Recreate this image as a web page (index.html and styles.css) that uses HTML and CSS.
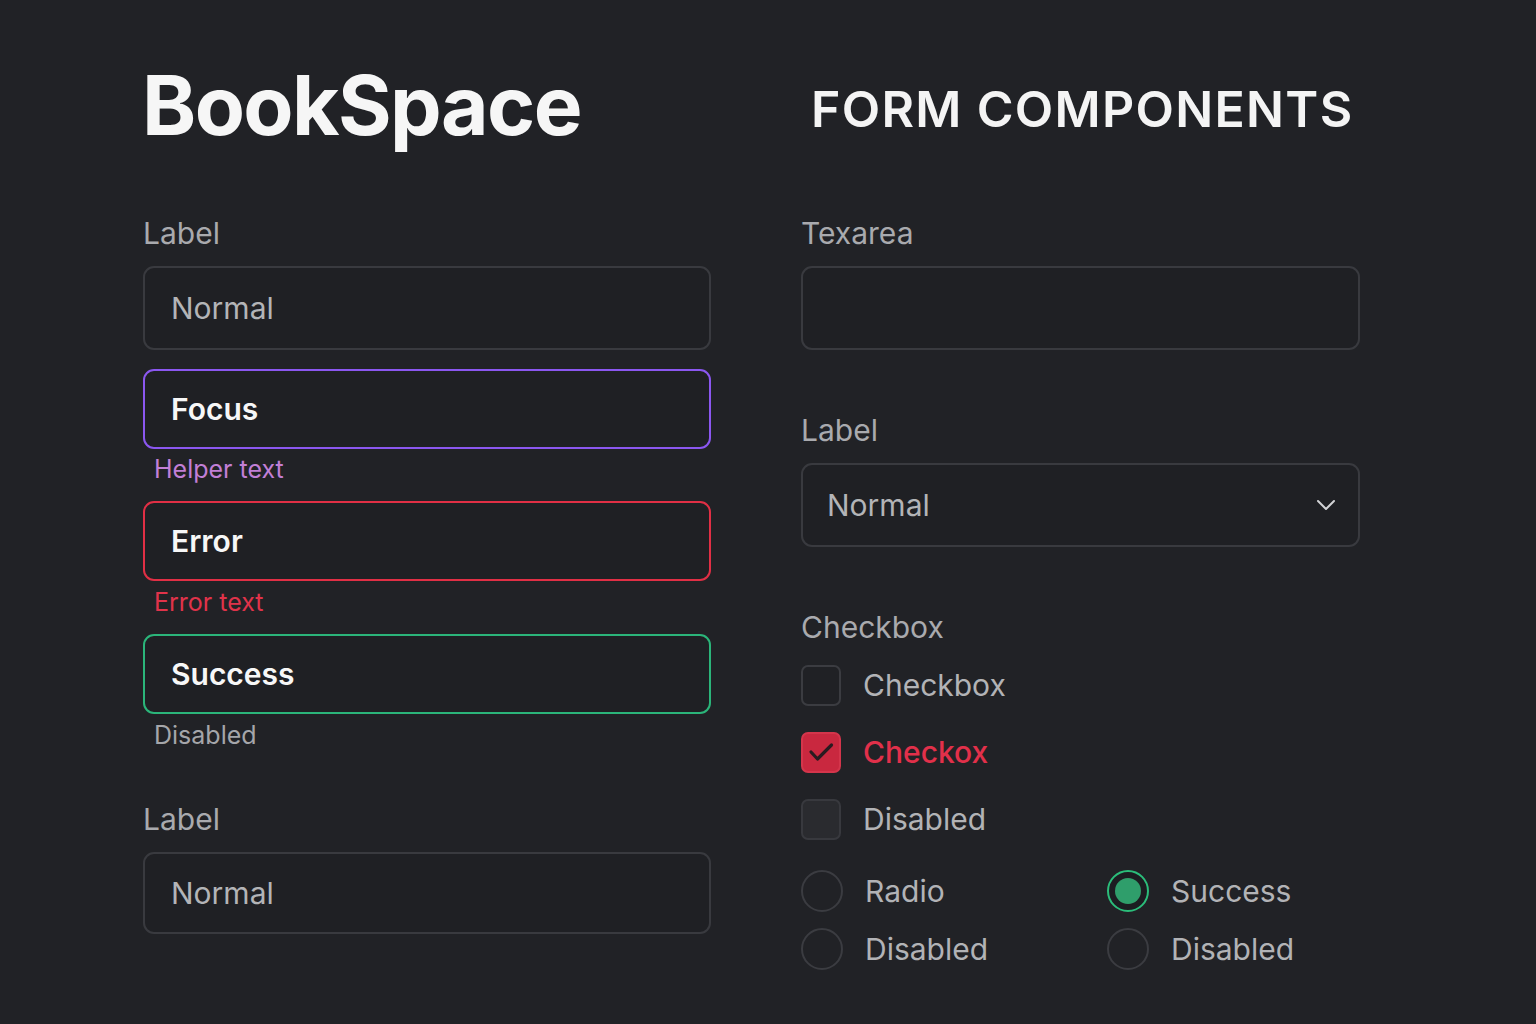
FILE: index.html
```html
<!DOCTYPE html>
<html lang="en">
<head>
<meta charset="utf-8">
<title>BookSpace – Form Components</title>
<link rel="stylesheet" href="styles.css">
</head>
<body>
<main class="page">
  <section class="col col-left">
    <h1 class="brand">BookSpace</h1>

    <div class="field">
      <div class="label">Label</div>
      <div class="input input-normal"><span class="ph">Normal</span></div>
    </div>

    <div class="input input-focus state"><span class="val">Focus</span></div>
    <div class="hint hint-helper">Helper text</div>

    <div class="input input-error state"><span class="val">Error</span></div>
    <div class="hint hint-error">Error text</div>

    <div class="input input-success state"><span class="val">Success</span></div>
    <div class="hint hint-disabled">Disabled</div>

    <div class="field field-last">
      <div class="label">Label</div>
      <div class="input input-normal input-tall"><span class="ph">Normal</span></div>
    </div>
  </section>

  <section class="col col-right">
    <h2 class="section-title">FORM COMPONENTS</h2>

    <div class="field">
      <div class="label">Texarea</div>
      <div class="input textarea"></div>
    </div>

    <div class="field field-select">
      <div class="label">Label</div>
      <div class="input select">
        <span class="ph">Normal</span>
        <svg class="chevron" width="20" height="12" viewBox="0 0 20 12" aria-hidden="true">
          <path d="M2 2 L10 10 L18 2" fill="none" stroke="#d2d3d6" stroke-width="2" stroke-linecap="round" stroke-linejoin="round"/>
        </svg>
      </div>
    </div>

    <div class="label label-check">Checkbox</div>
    <div class="checks">
      <div class="check-row">
        <span class="box"></span>
        <span class="check-text">Checkbox</span>
      </div>
      <div class="check-row">
        <span class="box box-checked">
          <svg width="30" height="30" viewBox="0 0 30 30" aria-hidden="true">
            <path d="M5 15 L11.5 22 L25.5 8" fill="none" stroke="#2a1b20" stroke-width="3.2" stroke-linecap="round" stroke-linejoin="round"/>
          </svg>
        </span>
        <span class="check-text check-text-red">Checkox</span>
      </div>
      <div class="check-row">
        <span class="box box-disabled"></span>
        <span class="check-text">Disabled</span>
      </div>
    </div>

    <div class="radios">
      <div class="radio-row">
        <span class="radio"></span>
        <span class="radio-text">Radio</span>
      </div>
      <div class="radio-row">
        <span class="radio radio-on"><span class="dot"></span></span>
        <span class="radio-text">Success</span>
      </div>
      <div class="radio-row">
        <span class="radio"></span>
        <span class="radio-text">Disabled</span>
      </div>
      <div class="radio-row">
        <span class="radio"></span>
        <span class="radio-text">Disabled</span>
      </div>
    </div>
  </section>
</main>
</body>
</html>
```

FILE: styles.css
```css
* { box-sizing: border-box; }

html, body {
  margin: 0;
  padding: 0;
  background: #212226;
}

body {
  width: 1536px;
  height: 1024px;
  overflow: hidden;
  font-family: Inter, "Noto Sans", "DejaVu Sans", sans-serif;
  color: #a9aaae;
}

.page {
  display: grid;
  grid-template-columns: 568px 559px;
  column-gap: 90px;
  padding: 56px 0 0 143px;
}

.col {
  display: flex;
  flex-direction: column;
}

.brand {
  margin: 0 0 0 -1px;
  height: 159px;
  font-size: 82px;
  line-height: 100px;
  font-weight: 700;
  letter-spacing: -1.6px;
  color: #f6f6f6;
  white-space: nowrap;
}

.section-title {
  margin: 0 0 0 10px;
  height: 159px;
  padding-top: 3px;
  font-size: 50px;
  line-height: 100px;
  font-weight: 600;
  letter-spacing: 1.3px;
  color: #f4f4f4;
  white-space: nowrap;
}

.field {
  display: flex;
  flex-direction: column;
  gap: 15px;
}

.label {
  font-size: 30px;
  line-height: 36px;
  color: #a9aaae;
}

.input {
  height: 84px;
  border: 2px solid #393a3f;
  border-radius: 11px;
  background: #1f2024;
  display: flex;
  align-items: center;
  padding: 0 26px;
  font-size: 30px;
}

.input-tall { height: 82px; }

.ph {
  color: #b3b4b7;
}

.state {
  height: 80px;
  border-width: 2px;
}

.val {
  color: #f7f7f7;
  font-weight: 600;
}

.input-focus {
  margin-top: 19px;
  border-color: #8b57f0;
  border-width: 2.5px;
}

.input-error {
  margin-top: 17px;
  border-color: #e12f45;
}

.input-success {
  margin-top: 17px;
  border-color: #2bb57a;
}

.hint {
  margin-top: 6px;
  padding-left: 11px;
  font-size: 25px;
  line-height: 30px;
}

.hint-helper { color: #c27fd6; margin-top: 5px; }
.hint-error { color: #e0334a; }
.hint-disabled { color: #a5a6aa; }

.field-last { margin-top: 51px; }

/* right column */
.textarea { height: 84px; }

.field-select { margin-top: 62px; }

.select {
  justify-content: space-between;
  padding-left: 24px;
  padding-right: 22px;
}

.chevron { display: block; }

.label-check { margin-top: 62px; }

.checks {
  margin-top: 19px;
  display: flex;
  flex-direction: column;
  gap: 25px;
}

.check-row {
  display: flex;
  align-items: center;
  height: 42px;
  gap: 22px;
}

.box {
  width: 40px;
  height: 41px;
  border: 2px solid #3b3c41;
  border-radius: 7px;
  background: #202125;
  display: flex;
  align-items: center;
  justify-content: center;
}

.box-checked {
  background: #c9283f;
  border-color: #d4354b;
}

.box-disabled {
  background: #2a2b2f;
  border-color: #38393e;
}

.check-text {
  font-size: 30px;
  color: #b2b3b6;
}

.check-text-red {
  color: #e2304a;
  font-weight: 500;
}

.radios {
  margin-top: 30px;
  display: grid;
  grid-template-columns: 306px auto;
  row-gap: 16px;
}

.radio-row {
  display: flex;
  align-items: center;
  height: 42px;
  gap: 22px;
}

.radio {
  width: 42px;
  height: 42px;
  border: 2px solid #3b3c41;
  border-radius: 50%;
  display: flex;
  align-items: center;
  justify-content: center;
  flex: none;
}

.radio-on {
  border-color: #2bbd7a;
  background: #1c1d21;
}

.dot {
  width: 26px;
  height: 26px;
  border-radius: 50%;
  background: #2f9e6b;
}

.radio-text {
  font-size: 30px;
  color: #b2b3b6;
}
```
